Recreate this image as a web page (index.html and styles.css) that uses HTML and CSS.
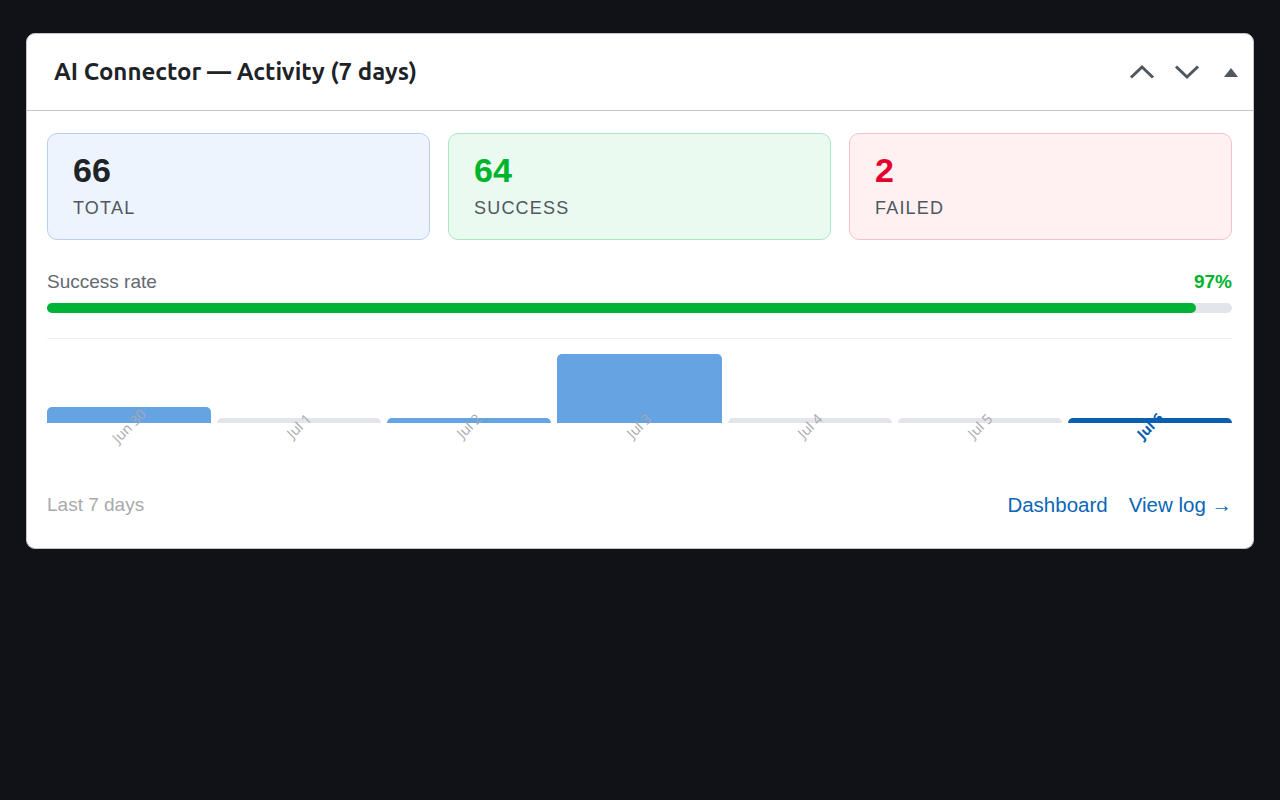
FILE: index.html
```html
<!DOCTYPE html>
<html lang="en">
<head>
    <meta charset="UTF-8">
    <meta name="viewport" content="width=device-width, initial-scale=1.0">
    <title>AI Connector Activity</title>
    <link rel="stylesheet" href="styles.css">
</head>
<body>
    <div class="widget">
        <div class="widget-head">
            <h2>AI Connector — Activity (7 days)</h2>
            <div class="handles">
                <button class="handle" aria-label="Move up">
                    <svg width="26" height="16" viewBox="0 0 26 16"><polyline points="2,13.5 13,3 24,13.5" fill="none" stroke="#50575e" stroke-width="3"/></svg>
                </button>
                <button class="handle" aria-label="Move down">
                    <svg width="26" height="16" viewBox="0 0 26 16"><polyline points="2,2.5 13,13 24,2.5" fill="none" stroke="#50575e" stroke-width="3"/></svg>
                </button>
                <button class="handle" aria-label="Toggle panel">
                    <svg width="14" height="9" viewBox="0 0 14 9"><polygon points="0,9 7,0 14,9" fill="#50575e"/></svg>
                </button>
            </div>
        </div>

        <div class="widget-body">
            <div class="stats">
                <div class="stat stat-total">
                    <div class="stat-num">66</div>
                    <div class="stat-label">TOTAL</div>
                </div>
                <div class="stat stat-ok">
                    <div class="stat-num">64</div>
                    <div class="stat-label">SUCCESS</div>
                </div>
                <div class="stat stat-fail">
                    <div class="stat-num">2</div>
                    <div class="stat-label">FAILED</div>
                </div>
            </div>

            <div class="rate-row">
                <span>Success rate</span>
                <strong>97%</strong>
            </div>
            <div class="rate-track">
                <div class="rate-fill" style="width: 97%"></div>
            </div>

            <div class="chart">
                <div class="day">
                    <div class="bar-area"><div class="bar" style="height: 16px"></div></div>
                    <span class="day-label">Jun 30</span>
                </div>
                <div class="day">
                    <div class="bar-area"><div class="bar empty"></div></div>
                    <span class="day-label">Jul 1</span>
                </div>
                <div class="day">
                    <div class="bar-area"><div class="bar" style="height: 5px"></div></div>
                    <span class="day-label">Jul 2</span>
                </div>
                <div class="day">
                    <div class="bar-area"><div class="bar" style="height: 69px"></div></div>
                    <span class="day-label">Jul 3</span>
                </div>
                <div class="day">
                    <div class="bar-area"><div class="bar empty"></div></div>
                    <span class="day-label">Jul 4</span>
                </div>
                <div class="day">
                    <div class="bar-area"><div class="bar empty"></div></div>
                    <span class="day-label">Jul 5</span>
                </div>
                <div class="day today">
                    <div class="bar-area"><div class="bar" style="height: 5px"></div></div>
                    <span class="day-label">Jul 6</span>
                </div>
            </div>

            <div class="widget-foot">
                <span class="muted">Last 7 days</span>
                <div class="links">
                    <a href="#">Dashboard</a>
                    <a href="#">View log →</a>
                </div>
            </div>
        </div>
    </div>
</body>
</html>
```

FILE: styles.css
```css
* {
    margin: 0;
    padding: 0;
    box-sizing: border-box;
}

body {
    font-family: "Liberation Sans", Arial, sans-serif;
    background: #111217;
    min-height: 100vh;
    padding: 33px 26px;
}

.widget {
    background: #fff;
    border: 1px solid #c3c4c7;
    border-radius: 9px;
    overflow: hidden;
}

.widget-head {
    display: flex;
    align-items: center;
    justify-content: space-between;
    height: 77px;
    padding-left: 27px;
    border-bottom: 1px solid #c3c4c7;
}

.widget-head h2 {
    font-family: Ubuntu, "Open Sans", sans-serif;
    font-size: 24px;
    font-weight: 700;
    line-height: 30px;
    color: #1d2327;
}

.handles {
    display: flex;
    align-items: center;
}

.handle {
    width: 44px;
    height: 44px;
    display: flex;
    align-items: center;
    justify-content: center;
    border: none;
    background: none;
    cursor: pointer;
}

.handle:first-child {
    margin-right: 1px;
}

.widget-body {
    padding: 22px 21px 31px 20px;
}

.stats {
    display: grid;
    grid-template-columns: repeat(3, 1fr);
    gap: 18px;
}

.stat {
    padding: 16px 25px 19px;
    border: 1px solid;
    border-radius: 10px;
}

.stat-num {
    font-size: 34px;
    font-weight: 700;
    line-height: 40px;
}

.stat-label {
    margin-top: 6px;
    font-size: 18px;
    line-height: 24px;
    letter-spacing: 1.2px;
    color: #50575e;
}

.stat-total {
    background: #edf4fd;
    border-color: #b9cfee;
}

.stat-total .stat-num {
    color: #1d2327;
}

.stat-ok {
    background: #eafaf1;
    border-color: #a9e7c3;
}

.stat-ok .stat-num {
    color: #00b32c;
}

.stat-fail {
    background: #fff0f1;
    border-color: #f6c1c8;
}

.stat-fail .stat-num {
    color: #e6002e;
}

.rate-row {
    display: flex;
    justify-content: space-between;
    margin-top: 31px;
    font-size: 19px;
    line-height: 22px;
    color: #646970;
}

.rate-row strong {
    color: #00b32c;
}

.rate-track {
    margin-top: 10px;
    height: 10px;
    background: #e4e5ea;
    border-radius: 5px;
}

.rate-fill {
    height: 100%;
    background: #00b336;
    border-radius: 5px;
}

.chart {
    display: flex;
    gap: 6px;
    margin-top: 25px;
    padding-top: 15px;
    border-top: 1px solid #f0f0f1;
}

.day {
    flex: 1;
    display: flex;
    flex-direction: column;
}

.bar-area {
    height: 69px;
    display: flex;
    align-items: flex-end;
}

.bar {
    width: 100%;
    background: #66a3e3;
    border-radius: 5px 5px 0 0;
}

.bar.empty {
    height: 5px;
    background: #e4e5ea;
}

.today .bar {
    background: #0a5fae;
}

.day-label {
    display: block;
    margin-top: -5px;
    text-align: center;
    font-family: "Open Sans", sans-serif;
    font-size: 14px;
    line-height: 16px;
    color: #a7aaad;
    transform: rotate(-45deg);
}

.today .day-label {
    color: #0a5fae;
    font-weight: 700;
}

.widget-foot {
    display: flex;
    justify-content: space-between;
    align-items: center;
    margin-top: 59px;
    font-size: 19px;
    line-height: 24px;
}

.muted {
    color: #a7aaad;
}

.links {
    display: flex;
    gap: 21px;
}

.links a {
    color: #0a66b8;
    text-decoration: none;
    font-size: 20.5px;
}
```
